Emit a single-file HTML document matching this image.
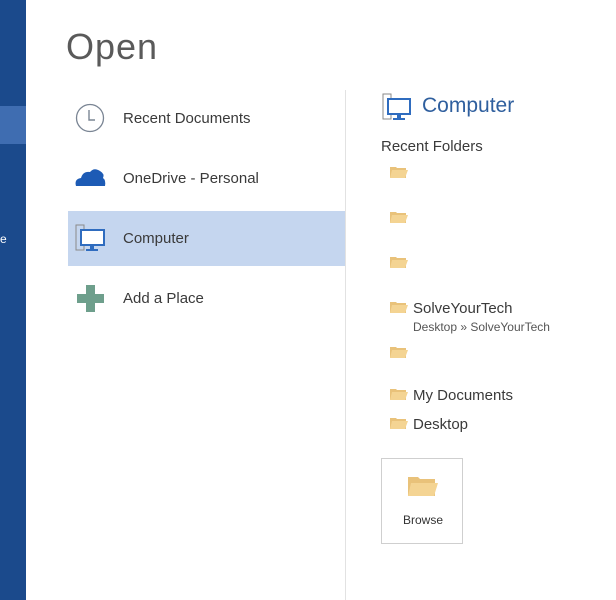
<!DOCTYPE html>
<html><head><meta charset="utf-8"><style>
body{margin:0;width:616px;height:600px;background:#fff;position:relative;overflow:hidden;font-family:"Liberation Sans",sans-serif;color:#444}
.a{position:absolute}
.t{font-size:15px;color:#3a3a3a}
.f{position:absolute;width:18px;height:13px}
</style></head><body>
<div class="a" style="left:0;top:0;width:26px;height:600px;background:#1b4a8c"></div>
<div class="a" style="left:0;top:106px;width:26px;height:38px;background:#3f6db1"></div>
<div class="a" style="left:0;top:232px;color:#fff;font-size:12px">e</div>
<div class="a" style="left:66px;top:26px;font-size:36px;color:#5a5a5a;letter-spacing:1px">Open</div>
<div class="a" style="left:345px;top:90px;width:1px;height:510px;background:#e2e2e2"></div>
<div class="a" style="left:68px;top:211px;width:277px;height:55px;background:#c5d6ef"></div>
<svg class="a" style="left:75px;top:103px" width="30" height="30"><circle cx="15" cy="15" r="13.5" fill="none" stroke="#7a8594" stroke-width="1.3"/><path d="M14 7V17H20" fill="none" stroke="#7a8594" stroke-width="1.4"/></svg>
<div class="a t" style="left:123px;top:110px">Recent Documents</div>
<svg class="a" style="left:74px;top:166px" width="32" height="22"><path d="M2 20 Q0 13 7 12 Q9 5 16 6 Q20 1 26 5 Q31 8 29 12 Q32 14 31 20Z" fill="#1d5bb5"/></svg>
<div class="a t" style="left:123px;top:170px">OneDrive - Personal</div>
<svg class="a" style="left:75px;top:223px" width="31" height="30"><rect x="1" y="2" width="8" height="25" fill="none" stroke="#8a8a8a"/><rect x="6" y="7" width="23" height="15" fill="#fff" stroke="#2f6cbf" stroke-width="2"/><rect x="15" y="22" width="4" height="4" fill="#2f6cbf"/><rect x="11" y="26" width="12" height="2" fill="#2f6cbf"/></svg>
<div class="a t" style="left:123px;top:230px">Computer</div>
<svg class="a" style="left:77px;top:285px" width="27" height="27"><path d="M9 0H18V9H27V18H18V27H9V18H0V9H9Z" fill="#6e9f8c"/></svg>
<div class="a t" style="left:123px;top:290px">Add a Place</div>
<svg class="a" style="left:382px;top:92px" width="30" height="30"><rect x="1" y="2" width="8" height="25" fill="none" stroke="#8a8a8a"/><rect x="6" y="7" width="22" height="15" fill="#fff" stroke="#2f6cbf" stroke-width="2"/><rect x="15" y="22" width="4" height="4" fill="#2f6cbf"/><rect x="11" y="26" width="12" height="2" fill="#2f6cbf"/></svg>
<div class="a" style="left:422px;top:94px;font-size:21px;color:#2f5f9e">Computer</div>
<div class="a t" style="left:381px;top:138px;font-size:15px">Recent Folders</div>
<svg width="0" height="0"><defs><g id="fo"><path d="M0 2H6L7 3H16V13H0Z" fill="#e9c27a"/><path d="M2 5H18L15 13H0Z" fill="#f4d493"/></g></defs></svg>
<svg class="f" style="left:390px;top:165px"><use href="#fo"/></svg>
<svg class="f" style="left:390px;top:210px"><use href="#fo"/></svg>
<svg class="f" style="left:390px;top:255px"><use href="#fo"/></svg>
<svg class="f" style="left:390px;top:300px"><use href="#fo"/></svg>
<div class="a t" style="left:413px;top:300px">SolveYourTech</div>
<div class="a" style="left:413px;top:320px;font-size:12px;color:#555">Desktop » SolveYourTech</div>
<svg class="f" style="left:390px;top:345px"><use href="#fo"/></svg>
<svg class="f" style="left:390px;top:387px"><use href="#fo"/></svg>
<div class="a t" style="left:413px;top:387px">My Documents</div>
<svg class="f" style="left:390px;top:416px"><use href="#fo"/></svg>
<div class="a t" style="left:413px;top:416px">Desktop</div>
<div class="a" style="left:381px;top:458px;width:80px;height:84px;border:1px solid #cfcfcf"></div>
<svg class="a" style="left:407px;top:474px" width="32" height="24"><path d="M1 3H11L13 5H28V22H1Z" fill="#e9c27a"/><path d="M4 9H31L27 22H1Z" fill="#f4d493"/></svg>
<div class="a" style="left:403px;top:513px;font-size:12px;color:#333">Browse</div>
</body></html>
